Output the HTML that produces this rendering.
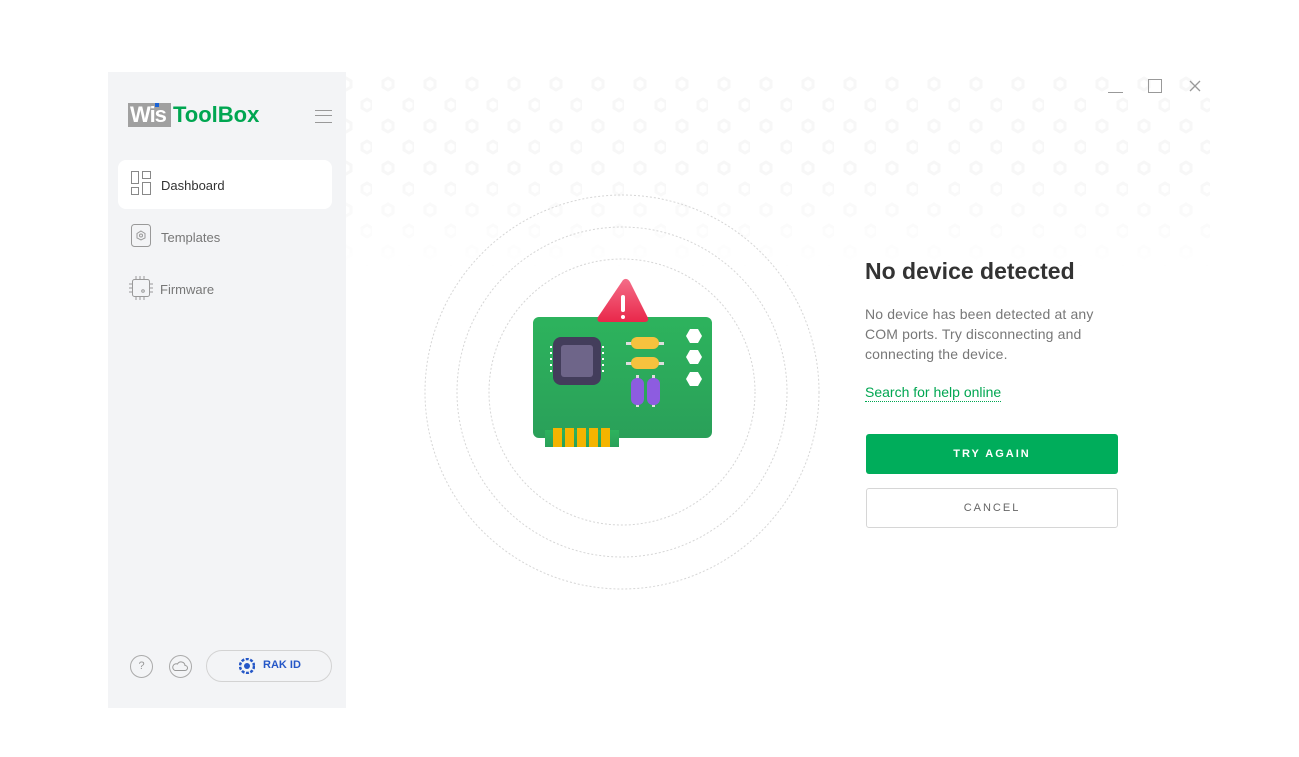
<!DOCTYPE html>
<html><head><style>
body{margin:0;width:1299px;height:757px;background:#fff;position:relative;overflow:hidden;font-family:"Liberation Sans",sans-serif}
.a{position:absolute}
.side{left:108px;top:72px;width:238px;height:636px;background:#f3f4f6}
.nav{font-size:13px;color:#777}
</style></head><body>
<svg class="a" style="left:346px;top:72px" width="864" height="200">
<defs>
<pattern id="p" width="42" height="42" patternUnits="userSpaceOnUse" x="-16" y="1">
<g fill="none" stroke="#f7f7f7" stroke-width="3">
<polygon points="16,5 21,8 21,14 16,17 11,14 11,8"/>
<polygon points="37,26 42,29 42,35 37,38 32,35 32,29"/>
</g></pattern>
<linearGradient id="f" x1="0" y1="0" x2="0" y2="1"><stop offset="0" stop-color="#fff" stop-opacity="1"/><stop offset=".5" stop-color="#fff" stop-opacity="1"/><stop offset="1" stop-color="#fff" stop-opacity="0"/></linearGradient>
<mask id="m"><rect width="864" height="200" fill="url(#f)"/></mask>
</defs>
<rect width="864" height="200" fill="url(#p)" mask="url(#m)"/>
</svg>
<div class="a side"></div>
<div class="a" style="left:128px;top:103px;width:43px;height:24px;background:#a0a0a0"></div>
<div class="a" style="left:130px;top:102px;font:bold 22px 'Liberation Sans';color:#fff;letter-spacing:-1px">Wis</div>
<div class="a" style="left:155px;top:103px;width:4px;height:4px;background:#1a63d6"></div>
<div class="a" style="left:173px;top:102px;font:bold 22px 'Liberation Sans';color:#00a651;letter-spacing:0px">ToolBox</div>
<div class="a" style="left:315px;top:110px;width:17px;height:11px;border-top:1px solid #999;border-bottom:1px solid #999"></div>
<div class="a" style="left:315px;top:115px;width:17px;height:1px;background:#999"></div>
<div class="a" style="left:118px;top:160px;width:214px;height:49px;background:#fff;border-radius:8px"></div>
<svg class="a" style="left:131px;top:171px" width="22" height="24" fill="none" stroke="#888" stroke-width="1"><rect x=".5" y=".5" width="7" height="12"/><rect x="11.5" y=".5" width="8" height="7"/><rect x=".5" y="16.5" width="7" height="7"/><rect x="11.5" y="11.5" width="8" height="12"/></svg>
<div class="a nav" style="left:161px;top:178px;color:#333">Dashboard</div>
<svg class="a" style="left:131px;top:224px" width="20" height="24" fill="none" stroke="#999"><rect x=".5" y=".5" width="19" height="22" rx="3"/><polygon points="10,7 14,9.5 14,14 10,16 6,14 6,9.5"/><circle cx="10" cy="11.5" r="1.5"/></svg>
<div class="a nav" style="left:161px;top:230px">Templates</div>
<svg class="a" style="left:129px;top:276px" width="24" height="24" fill="none" stroke="#999"><rect x="3.5" y="3.5" width="17" height="17" rx="2"/><path d="M7 0v3M11 0v3M15 0v3M7 21v3M11 21v3M15 21v3M0 8h3M0 12h3M0 16h3M21 8h3M21 12h3M21 16h3"/><circle cx="14" cy="15" r="1.3"/></svg>
<div class="a nav" style="left:160px;top:282px">Firmware</div>
<div class="a" style="left:130px;top:655px;width:21px;height:21px;border:1px solid #aaa;border-radius:50%;text-align:center;font-size:11px;line-height:21px;color:#999">?</div>
<div class="a" style="left:169px;top:655px;width:21px;height:21px;border:1px solid #aaa;border-radius:50%"></div>
<svg class="a" style="left:172px;top:660px" width="16" height="12" fill="none" stroke="#999"><path d="M3 10.5h10a2.5 2.5 0 0 0 0-5 4 4 0 0 0-7.5-1.5A3 3 0 0 0 3 10.5z"/></svg>
<div class="a" style="left:206px;top:650px;width:124px;height:30px;border:1px solid #d3d3d3;border-radius:16px"></div>
<svg class="a" style="left:239px;top:658px" width="16" height="16"><circle cx="8" cy="8" r="7" fill="none" stroke="#2557c7" stroke-width="2.5" stroke-dasharray="3 1.5"/><circle cx="8" cy="8" r="3" fill="#2557c7"/></svg>
<div class="a" style="left:263px;top:659px;font:bold 11px 'Liberation Sans';color:#2557c7">RAK ID</div>
<div class="a" style="left:1108px;top:92px;width:15px;height:1px;background:#999"></div>
<div class="a" style="left:1148px;top:79px;width:12px;height:12px;border:1px solid #999"></div>
<svg class="a" style="left:1189px;top:80px" width="12" height="12" stroke="#999" stroke-width="1.3"><path d="M1 1l10 10M11 1L1 11"/></svg>
<svg class="a" style="left:420px;top:190px" width="404" height="404" fill="none" stroke="#d6d6d6" stroke-dasharray="2 2"><circle cx="202" cy="202" r="197"/><circle cx="202" cy="202" r="165"/><circle cx="202" cy="202" r="133"/></svg>
<svg class="a" style="left:520px;top:270px" width="200" height="190">
<defs><linearGradient id="r" x1="0" y1="0" x2="0" y2="1"><stop offset="0" stop-color="#f46d88"/><stop offset="1" stop-color="#e9274a"/></linearGradient>
<linearGradient id="g" x1="0" y1="0" x2="0" y2="1"><stop offset="0" stop-color="#2db35d"/><stop offset="1" stop-color="#2aa059"/></linearGradient></defs>
<rect x="13" y="47" width="179" height="121" rx="6" fill="url(#g)"/>
<rect x="25" y="160" width="74" height="17" fill="url(#g)"/>
<g fill="#f5b400"><rect x="33" y="158" width="9" height="19"/><rect x="45" y="158" width="9" height="19"/><rect x="57" y="158" width="9" height="19"/><rect x="69" y="158" width="9" height="19"/><rect x="81" y="158" width="9" height="19"/></g>
<path d="M103 10 Q107 7 110 12 L128 48 Q129 52 124 52 L81 52 Q76 52 78 47Z" fill="url(#r)"/>
<rect x="101" y="25" width="4" height="17" rx="2" fill="#fff"/><circle cx="103" cy="47" r="2" fill="#fff"/>
<rect x="33" y="67" width="48" height="48" rx="8" fill="#433d5b"/><rect x="41" y="75" width="32" height="32" rx="3" fill="#6e6589"/>
<g fill="#fff"><rect x="30" y="76" width="2" height="2"/><rect x="30" y="82" width="2" height="2"/><rect x="30" y="88" width="2" height="2"/><rect x="30" y="94" width="2" height="2"/><rect x="30" y="100" width="2" height="2"/><rect x="82" y="76" width="2" height="2"/><rect x="82" y="82" width="2" height="2"/><rect x="82" y="88" width="2" height="2"/><rect x="82" y="94" width="2" height="2"/><rect x="82" y="100" width="2" height="2"/></g>
<g fill="#ddd"><rect x="106" y="72" width="38" height="3"/><rect x="106" y="92" width="38" height="3"/><rect x="116" y="105" width="3" height="32"/><rect x="132" y="105" width="3" height="32"/></g>
<rect x="111" y="67" width="28" height="12" rx="6" fill="#f6c23e"/><rect x="111" y="87" width="28" height="12" rx="6" fill="#f6c23e"/>
<rect x="111" y="108" width="13" height="27" rx="6" fill="#8d5ce0"/><rect x="127" y="108" width="13" height="27" rx="6" fill="#8d5ce0"/>
<g fill="#fff"><polygon points="170,59 178,59 182,66 178,73 170,73 166,66"/><polygon points="170,80 178,80 182,87 178,94 170,94 166,87"/><polygon points="170,102 178,102 182,109 178,116 170,116 166,109"/></g>
</svg>
<div class="a" style="left:865px;top:258px;font-size:23px;font-weight:bold;color:#333">No device detected</div>
<div class="a" style="left:865px;top:304px;width:260px;font-size:14px;line-height:20px;color:#777;letter-spacing:.15px">No device has been detected at any<br>COM ports. Try disconnecting and<br>connecting the device.</div>
<div class="a" style="left:865px;top:384px;font-size:14px;color:#00a651;border-bottom:1px dotted #00a651;line-height:17px">Search for help online</div>
<div class="a" style="left:866px;top:434px;width:252px;height:40px;background:#00ad5b;border-radius:3px;color:#fff;font:bold 11px 'Liberation Sans';letter-spacing:2px;text-align:center;line-height:40px">TRY AGAIN</div>
<div class="a" style="left:866px;top:488px;width:250px;height:38px;border:1px solid #d6d6d6;border-radius:3px;color:#666;font-size:11px;letter-spacing:2px;text-align:center;line-height:38px">CANCEL</div>
</body></html>
